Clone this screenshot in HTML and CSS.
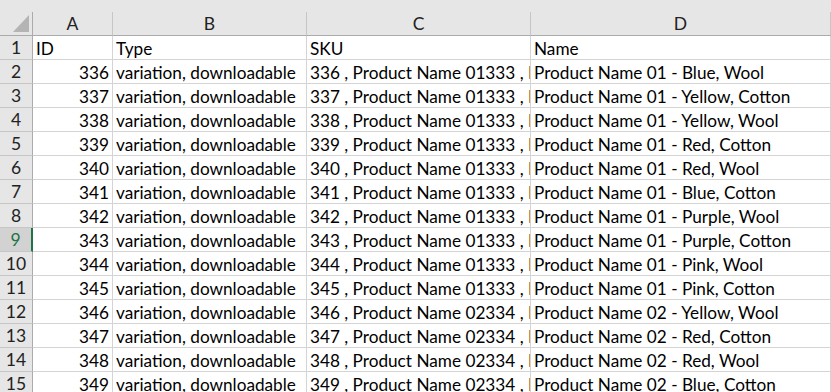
FILE: index.html
```html
<!DOCTYPE html>
<html lang="en">
<head>
    <meta charset="UTF-8">
    <title>Products sheet</title>
    <link rel="stylesheet" href="styles.css">
</head>
<body>
    <div class="sheet" id="sheet">
        <!-- column headers -->
        <div class="corner"><span class="tri"></span></div>
        <div class="colhead">A</div>
        <div class="colhead">B</div>
        <div class="colhead">C</div>
        <div class="colhead">D</div>

        <div class="rowhead">1</div>
        <div class="cell">ID</div>
        <div class="cell">Type</div>
        <div class="cell">SKU</div>
        <div class="cell">Name</div>
    </div>

    <script>
        // Data rows
        const rows = [
            [336, '01333', '01', 'Blue, Wool'],
            [337, '01333', '01', 'Yellow, Cotton'],
            [338, '01333', '01', 'Yellow, Wool'],
            [339, '01333', '01', 'Red, Cotton'],
            [340, '01333', '01', 'Red, Wool'],
            [341, '01333', '01', 'Blue, Cotton'],
            [342, '01333', '01', 'Purple, Wool'],
            [343, '01333', '01', 'Purple, Cotton'],
            [344, '01333', '01', 'Pink, Wool'],
            [345, '01333', '01', 'Pink, Cotton'],
            [346, '02334', '02', 'Yellow, Wool'],
            [347, '02334', '02', 'Red, Cotton'],
            [348, '02334', '02', 'Red, Wool'],
            [349, '02334', '02', 'Blue, Cotton']
        ];

        let sheet = document.getElementById('sheet');
        rows.forEach((r, i) => {
            let num = i + 2;
            let selected = num === 9 ? ' selected' : '';
            sheet.insertAdjacentHTML('beforeend', `
                <div class="rowhead${selected}">${num}</div>
                <div class="cell num">${r[0]}</div>
                <div class="cell">variation, downloadable</div>
                <div class="cell">${r[0]} , Product Name ${r[1]} , Product Name ${r[2]}</div>
                <div class="cell">Product Name ${r[2]} - ${r[3]}</div>
            `);
        });
    </script>
</body>
</html>
```

FILE: styles.css
```css
body {
    margin: 0;
    padding-top: 12px;
    background-color: #e6e6e6;
    font-family: Lato, "Liberation Sans", sans-serif;
    overflow: hidden;
}

.sheet {
    display: grid;
    grid-template-columns: 33px 80px 194px 224px 300px;
    grid-auto-rows: 24px;
    background-color: #fff;
}

.sheet > div {
    box-sizing: border-box;
    border-right: 1px solid #d4d4d4;
    border-bottom: 1px solid #d4d4d4;
    white-space: nowrap;
    overflow: hidden;
}

/* Headers */
.corner, .colhead, .rowhead {
    background-color: #e6e6e6;
    color: #222;
}

.corner {
    position: relative;
    border-color: #ababab !important;
}

.tri {
    position: absolute;
    left: 13px;
    bottom: 3px;
    width: 16px;
    height: 17px;
    background-color: #b4b4b4;
    clip-path: polygon(100% 0, 100% 100%, 0 100%);
}

.colhead {
    border-right-color: #c6c6c6 !important;
    border-bottom-color: #ababab !important;
    text-align: center;
    font-size: 17.5px;
    line-height: 24px;
}

.rowhead {
    border-right-color: #ababab !important;
    border-bottom-color: #c6c6c6 !important;
    text-align: center;
    font-size: 17.5px;
    line-height: 24px;
}

.rowhead.selected {
    background-color: #d2d2d2;
    color: #217346;
    border-right: 2px solid #217346 !important;
}

/* Cells */
.cell {
    padding: 0 3px;
    font-size: 17.2px;
    line-height: 25px;
    color: #000;
}

.cell.num {
    text-align: right;
}
```
